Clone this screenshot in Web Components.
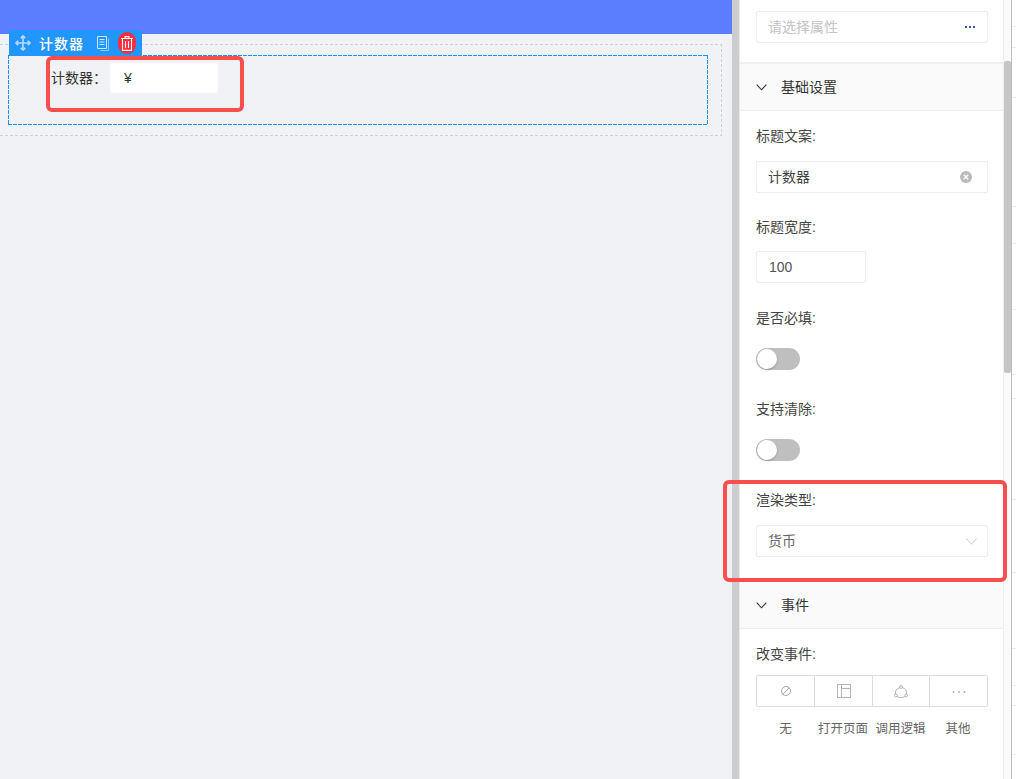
<!DOCTYPE html>
<html lang="zh">
<head>
<meta charset="UTF-8">
<title>计数器</title>
<style>
  html, body { margin: 0; height: 100%; overflow: hidden; background: #fff; }
  body { font: 14px "Liberation Sans", "Noto Sans CJK SC", sans-serif; color: #333; }
</style>
</head>
<body>
<editor-page>
  <design-canvas slot="canvas">
    <counter-field>
      <span slot="label">计数器：</span>
      ¥
    </counter-field>
  </design-canvas>
  <prop-panel slot="panel">
    <div slot="top"><text-box placeholder dots>请选择属性</text-box></div>
    <prop-section title="基础设置">
      <prop-field style="--gap:14px;--after:23px">
        <span slot="label">标题文案:</span>
        <text-box clearable>计数器</text-box>
      </prop-field>
      <prop-field>
        <span slot="label">标题宽度:</span>
        <text-box style="width:110px;--c:#555;--t:0px;--i:1px">100</text-box>
      </prop-field>
      <prop-field>
        <span slot="label">是否必填:</span>
        <toggle-switch></toggle-switch>
      </prop-field>
      <prop-field>
        <span slot="label">支持清除:</span>
        <toggle-switch></toggle-switch>
      </prop-field>
      <prop-field style="--gap:14px;--after:23px">
        <span slot="label">渲染类型:</span>
        <text-box select>货币</text-box>
      </prop-field>
    </prop-section>
    <prop-section title="事件">
      <prop-field style="--gap:10px;--after:0px">
        <span slot="label">改变事件:</span>
        <event-tabs></event-tabs>
      </prop-field>
    </prop-section>
  </prop-panel>
</editor-page>

<template id="editor-page-tpl">
  <style>
    :host { display: flex; position: relative; width: 1016px; height: 779px; overflow: hidden; }
    .left { width: 732px; flex: none; }
    .bar { width: 7px; flex: none; background: #cdcdcf; border-right: 1px solid #e9e9ea; }
    .panel { width: 263px; flex: none; }
    .track { width: 7px; flex: none; background: #fafafa; border-left: 1px solid #eee; }
    .thumb { margin-top: 61px; height: 312px; background: #c6c6c8; border-radius: 2px; }
    .edge { flex: 1; border-left: 1px solid #bdbdbd; }
    .edge svg { display: block; }
    /* red marks drawn over the screenshot */
    .mark { position: absolute; box-sizing: border-box; border: 4px solid #f94e4b; border-radius: 6px; pointer-events: none; }
  </style>
  <div class="left"><slot name="canvas"></slot></div>
  <div class="bar"></div>
  <div class="panel"><slot name="panel"></slot></div>
  <div class="track"><div class="thumb"></div></div>
  <div class="edge">
    <svg width="4" height="779" stroke="#ececec" shape-rendering="crispEdges">
      <path d="M0 26.5h4M0 47.5h4M0 97.5h4M0 206.5h4M0 243.5h4M0 309.5h4M0 374.5h4M0 398.5h4M0 499.5h4M0 572.5h4M0 648.5h4M0 685.5h4M0 705.5h4M0 754.5h4"/>
    </svg>
  </div>
  <div class="mark" style="left:46px;top:56px;width:198px;height:56px"></div>
  <div class="mark" style="left:723px;top:480px;width:284px;height:102px"></div>
</template>

<template id="design-canvas-tpl">
  <style>
    :host { display: block; height: 779px; background: #f0f2f6; overflow: hidden; }
    .top { height: 34px; background: #5a7eff; }
    .outer, .inner {
      background-repeat: no-repeat;
      background-size: 100% 1px, 100% 1px, 1px 100%, 1px 100%;
      background-position: 0 0, 0 100%, 0 0, 100% 0;
      background-image:
        repeating-linear-gradient(90deg, var(--d) 0 var(--on), transparent var(--on) var(--len)),
        repeating-linear-gradient(90deg, var(--d) 0 var(--on), transparent var(--on) var(--len)),
        repeating-linear-gradient(180deg, var(--d) 0 var(--on), transparent var(--on) var(--len)),
        repeating-linear-gradient(180deg, var(--d) 0 var(--on), transparent var(--on) var(--len));
    }
    .outer { --d: #cfcfd1; --on: 3px; --len: 5px; margin: 10px 10px 0 -10px; padding: 11px 14px 11px 18px; }
    .inner { --d: #1890ff; --on: 4px; --len: 5px; position: relative; height: 70px; }
    .tools { position: absolute; left: 1px; top: -25px; width: 133px; height: 26px; background: #2196ff; display: flex; align-items: center; color: #fff; font-size: 14px; font-weight: 500; letter-spacing: 1px; }
    .tools svg { flex: none; display: block; }
    .name { margin: 0 13px 0 8px; white-space: nowrap; }
    .del { margin-left: 8px; width: 18px; height: 22px; border-radius: 9px; background: #ff2d3d; display: flex; align-items: center; justify-content: center; }
  </style>
  <div class="top"></div>
  <div class="outer">
    <div class="inner">
      <div class="tools">
        <svg style="margin-left:6px" width="16" height="16" viewBox="0 0 16 16" fill="none" stroke="#b5dbff" stroke-width="1.700">
          <path d="M8 1v14M1 8h14"/>
          <path d="M5.800 3.200 8 1l2.200 2.200M5.800 12.800 8 15l2.200-2.200M3.200 5.800 1 8l2.200 2.200M12.800 5.800 15 8l-2.200 2.200"/>
        </svg>
        <span class="name">计数器</span>
        <svg width="13" height="15" viewBox="0 0 13 15" fill="none" stroke="#cfe6ff" stroke-width="1">
          <path d="M.5.5h9v12h-9z"/>
          <path d="M2.500 3.500h5M2.500 6h5M2.500 8.500h5"/>
          <path stroke="#8cc6ff" d="M11.500 2.500v12h-8"/>
        </svg>
        <div class="del">
          <svg width="12" height="15" viewBox="0 0 12 15" fill="none" stroke="#fff" stroke-width="1.100">
            <path d="M0 2.500h12M4 2.500V.6h4v1.900M1.500 2.500v11.900h9V2.500M4.500 5v7M7.500 5v7"/>
          </svg>
        </div>
      </div>
      <slot></slot>
    </div>
  </div>
</template>

<template id="counter-field-tpl">
  <style>
    :host { display: flex; align-items: flex-start; padding: 8px 0 0 43px; color: #333; font-size: 14px; }
    .lab { width: 59px; flex: none; white-space: nowrap; line-height: 30px; }
    .val { width: 94px; height: 30px; line-height: 30px; padding-left: 14px; background: #fff; border-radius: 2px; }
  </style>
  <div class="lab"><slot name="label"></slot></div>
  <div class="val"><slot></slot></div>
</template>

<template id="prop-panel-tpl">
  <style>
    :host { display: block; height: 779px; background: #fff; overflow: hidden; }
    .top { padding: 11px 15px 19px 16px; }
  </style>
  <div class="top"><slot name="top"></slot></div>
  <slot></slot>
</template>

<template id="prop-section-tpl">
  <style>
    :host { display: block; }
    .head { box-sizing: border-box; height: 49px; display: flex; align-items: center; padding-left: 16px; background: #fafafa; border-top: 2px solid #f0f0f0; border-bottom: 1px solid #eee; color: #333; }
    .head svg { display: block; margin-right: 14px; }
    .title { margin-top: -2px; }
    .body { padding: 14px 15px 0 16px; }
  </style>
  <div class="head">
    <svg width="11" height="7" viewBox="0 0 11 7" fill="none" stroke="#333" stroke-width="1.100"><path d="M.7.7 5.500 5.800 10.300.7"/></svg>
    <span class="title"></span>
  </div>
  <div class="body"><slot></slot></div>
</template>

<template id="prop-field-tpl">
  <style>
    :host { display: block; padding-bottom: var(--after, 24px); }
    .lab { height: 22px; line-height: 22px; color: #444; white-space: nowrap; }
    .ctl { margin-top: var(--gap, 13px); }
  </style>
  <div class="lab"><slot name="label"></slot></div>
  <div class="ctl"><slot></slot></div>
</template>

<template id="text-box-tpl">
  <style>
    :host { display: block; }
    .box { box-sizing: border-box; height: 32px; display: flex; align-items: center; padding: 0 15px 0 11px; border: 1px solid #ebedf0; border-radius: 2px; background: #fff; color: var(--c, #444); }
    .txt { flex: 1; white-space: nowrap; margin-top: var(--t, -2px); padding-left: var(--i, 0); }
    svg { display: block; flex: none; }
  </style>
  <div class="box">
    <span class="txt"><slot></slot></span>
    <span class="end"></span>
  </div>
</template>

<template id="toggle-switch-tpl">
  <style>
    :host { display: block; padding: 6px 0 4px; }
    .sw { position: relative; width: 44px; height: 22px; border-radius: 11px; background: #bfbfbf; }
    .sw::after { content: ""; position: absolute; left: 1px; top: 1px; width: 20px; height: 20px; border-radius: 50%; background: #fff; box-shadow: 0 1px 2px rgba(0,0,0,.25); }
  </style>
  <div class="sw"></div>
</template>

<template id="event-tabs-tpl">
  <style>
    :host { display: block; }
    .row { display: grid; grid-template-columns: 57px 58px 57px 58px; }
    .cells { box-sizing: border-box; height: 32px; border: 1px solid #dcdcdc; border-radius: 2px; }
    .cell { display: flex; align-items: center; justify-content: center; height: 30px; border-left: 1px solid #dcdcdc; }
    .cell:first-child { border-left: 0; }
    .names { margin-top: 11px; padding: 0 1px; color: #666; font-size: 12.500px; line-height: 22px; text-align: center; white-space: nowrap; }
    svg { display: block; }
  </style>
  <div class="row cells">
    <div class="cell">
      <svg width="12" height="12" viewBox="0 0 12 12" fill="none" stroke="#aaa"><circle cx="6" cy="6" r="4.500"/><path d="M9.200 2.800 2.800 9.200"/></svg>
    </div>
    <div class="cell">
      <svg width="14" height="14" viewBox="0 0 14 14" fill="none" stroke="#b4b4b4" shape-rendering="crispEdges"><path d="M.5.5h13v13H.5zM4.500.5v13M4.500 4.500h9"/></svg>
    </div>
    <div class="cell">
      <svg width="14" height="13" viewBox="0 0 14 13" fill="none" stroke="#aaa" stroke-width=".9"><circle cx="7" cy="2" r="1.400"/><circle cx="1.800" cy="10.500" r="1.400"/><circle cx="12.200" cy="10.500" r="1.400"/><path d="M5.700 2.700A5.800 5.800 0 0 0 1.400 9.100M8.300 2.700A5.800 5.800 0 0 1 12.600 9.100M3.100 11.200A5.800 5.800 0 0 0 10.900 11.200"/></svg>
    </div>
    <div class="cell">
      <svg style="margin-top:2px" width="14" height="4" viewBox="0 0 14 4" fill="#b4b4b4"><circle cx="1.500" cy="2" r="1"/><circle cx="7" cy="2" r="1"/><circle cx="12.500" cy="2" r="1"/></svg>
    </div>
  </div>
  <div class="row names">
    <span>无</span><span>打开页面</span><span>调用逻辑</span><span>其他</span>
  </div>
</template>

<script>
  // every element just clones its template into an open shadow root
  function shadowFrom(el, id) {
    el.attachShadow({ mode: 'open' });
    el.shadowRoot.append(document.getElementById(id).content.cloneNode(true));
    return el.shadowRoot;
  }

  class EditorPage extends HTMLElement { constructor() { super(); shadowFrom(this, 'editor-page-tpl'); } }
  class DesignCanvas extends HTMLElement { constructor() { super(); shadowFrom(this, 'design-canvas-tpl'); } }
  class CounterField extends HTMLElement { constructor() { super(); shadowFrom(this, 'counter-field-tpl'); } }
  class PropPanel extends HTMLElement { constructor() { super(); shadowFrom(this, 'prop-panel-tpl'); } }
  class PropField extends HTMLElement { constructor() { super(); shadowFrom(this, 'prop-field-tpl'); } }
  class ToggleSwitch extends HTMLElement { constructor() { super(); shadowFrom(this, 'toggle-switch-tpl'); } }
  class EventTabs extends HTMLElement { constructor() { super(); shadowFrom(this, 'event-tabs-tpl'); } }

  class PropSection extends HTMLElement {
    connectedCallback() {
      const root = shadowFrom(this, 'prop-section-tpl');
      root.querySelector('.title').textContent = this.getAttribute('title');
    }
  }

  class TextBox extends HTMLElement {
    connectedCallback() {
      const root = shadowFrom(this, 'text-box-tpl');
      const end = root.querySelector('.end');
      if (this.hasAttribute('placeholder')) this.style.setProperty('--c', '#c4c4c4');
      if (this.hasAttribute('dots')) {
        end.innerHTML = '<svg width="10" height="2" viewBox="0 0 10 2" fill="#34558c"><rect x="0" y="0" width="2" height="2"/><rect x="4" y="0" width="2" height="2"/><rect x="8" y="0" width="2" height="2"/></svg>';
        end.style.marginRight = '-3px';
      }
      if (this.hasAttribute('clearable')) {
        end.innerHTML = '<svg width="12" height="12" viewBox="0 0 12 12"><circle cx="6" cy="6" r="6" fill="#bbb"/><path d="M3.800 3.800 8.200 8.200M8.200 3.800 3.800 8.200" stroke="#fff" stroke-width="1.300"/></svg>';
      }
      if (this.hasAttribute('select')) {
        this.style.setProperty('--c', '#666');
        end.innerHTML = '<svg width="11" height="7" viewBox="0 0 11 7" fill="none" stroke="#c8c8c8"><path d="M.5.500 5.500 6.300 10.500.500"/></svg>';
        end.style.marginRight = '-5px';
      }
    }
  }

  customElements.define('editor-page', EditorPage);
  customElements.define('design-canvas', DesignCanvas);
  customElements.define('counter-field', CounterField);
  customElements.define('prop-panel', PropPanel);
  customElements.define('prop-section', PropSection);
  customElements.define('prop-field', PropField);
  customElements.define('text-box', TextBox);
  customElements.define('toggle-switch', ToggleSwitch);
  customElements.define('event-tabs', EventTabs);
</script>
</body>
</html>
